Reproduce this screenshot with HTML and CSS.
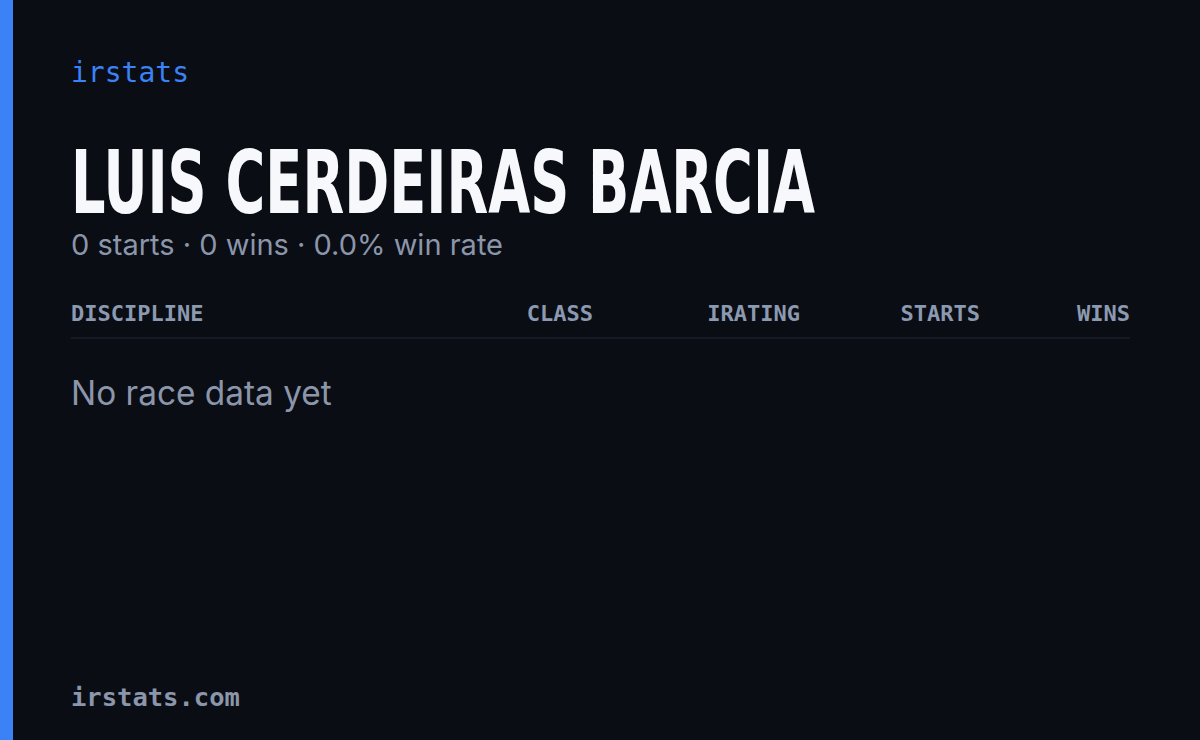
FILE: index.html
```html
<!DOCTYPE html>
<html lang="en">
<head>
<meta charset="UTF-8">
<title>irstats - Luis Cerdeiras Barcia</title>
<link rel="stylesheet" href="styles.css">
</head>
<body>
<div class="card">
<div class="accent"></div>
<main class="content">
<div class="brand">irstats</div>
<h1 class="name"><span>LUIS CERDEIRAS BARCIA</span></h1>
<p class="summary">0 starts · 0 wins · 0.0% win rate</p>

<div class="table">
<div class="row head">
<div class="col-discipline">DISCIPLINE</div>
<div class="col-num">CLASS</div>
<div class="col-num">IRATING</div>
<div class="col-num">STARTS</div>
<div class="col-num">WINS</div>
</div>
<p class="empty">No race data yet</p>
</div>

<div class="footer">irstats.com</div>
</main>
</div>
</body>
</html>
```

FILE: styles.css
```css
html, body {
margin: 0;
padding: 0;
}
body {
background-color: #0a0d14;
font-family: "Inter", "DejaVu Sans", sans-serif;
}
.card {
display: flex;
width: 1200px;
height: 740px;
background-color: #0a0d14;
}
.accent {
flex: 0 0 13px;
background-color: #3b82f6;
}
.content {
flex: 1;
min-width: 0;
display: flex;
flex-direction: column;
padding: 56px 70px 28px 58px;
}
.brand {
font-family: "DejaVu Sans Mono", monospace;
font-size: 28px;
color: #3b82f6;
line-height: 34px;
}
.name {
margin: 53px 0 0;
font-family: "DejaVu Sans Condensed", "DejaVu Sans", sans-serif;
font-weight: bold;
font-size: 88px;
line-height: 80px;
color: #f7f8fb;
white-space: nowrap;
}
.name span {
display: inline-block;
transform: scaleX(0.685);
transform-origin: left center;
}
.summary {
margin: 4px 0 0;
font-family: "Inter", sans-serif;
font-size: 29px;
line-height: 36px;
color: #8b96ab;
}
.table {
margin-top: 38px;
}
.row {
display: grid;
grid-template-columns: 1fr 160px 207px 180px 150px;
}
.head {
font-family: "DejaVu Sans Mono", monospace;
font-weight: bold;
font-size: 22px;
line-height: 26px;
color: #8b9ab0;
padding-bottom: 10px;
border-bottom: 2px solid #161a24;
}
.col-num {
text-align: right;
}
.empty {
margin: 34px 0 0;
font-family: "Inter", sans-serif;
font-size: 33.4px;
line-height: 40px;
color: #8b96ab;
}
.footer {
margin-top: auto;
font-family: "DejaVu Sans Mono", monospace;
font-weight: bold;
font-size: 25.5px;
color: #8b96ab;
}
```
